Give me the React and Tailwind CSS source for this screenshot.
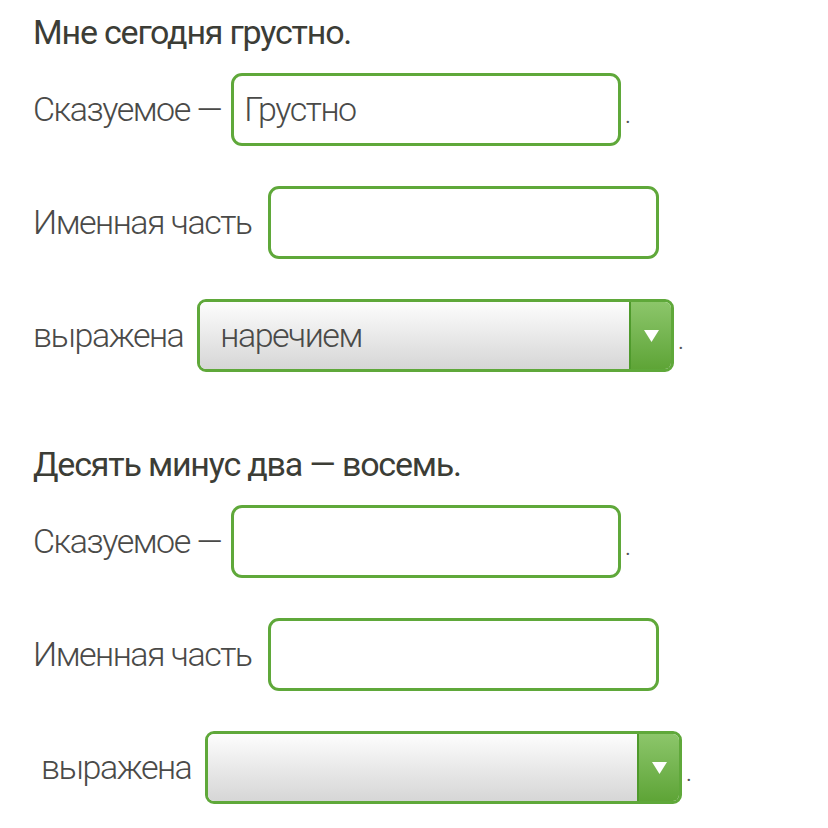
import React from "react";

const font = { fontFamily: "Roboto, 'Noto Sans', sans-serif" };

const TextBox = ({ value, width }) => (
  <div
    className={`h-[73px] border-[3px] border-[#5fa83a] rounded-[11px] bg-white flex items-center pl-[10px] text-[34px] font-light text-[#4a4a48] tracking-[-1.5px] ${width}`}
  >
    {value}
  </div>
);

const Select = ({ value, width }) => (
  <div
    className={`h-[73px] border-[3px] border-[#5fa83a] rounded-[9px] overflow-hidden flex ${width}`}
  >
    <div className="flex-1 flex items-center pl-[20px] bg-gradient-to-b from-[#fdfdfd] to-[#d6d6d6] text-[34px] font-light text-[#4a4a48] tracking-[-1.5px]">
      {value}
    </div>
    <div className="w-[42px] border-l-2 border-[#4f9a2c] bg-gradient-to-b from-[#8cc66a] to-[#5ea436] flex items-center justify-center">
      <svg width="15" height="12" viewBox="0 0 15 12">
        <path d="M0 0 H15 L7.5 12 Z" fill="#fff" />
      </svg>
    </div>
  </div>
);

const Row = ({ label, children, dot, gap, indent }) => (
  <div className={`flex items-center h-[73px] ${indent ? "pl-[8px]" : ""}`}>
    <span
      className={`text-[34px] font-light text-[#4a4a48] tracking-[-1.5px] whitespace-pre ${gap}`}
    >
      {label}
    </span>
    {children}
    {dot && <span className="text-[20px] text-[#555] ml-[4px] mt-[12px]">.</span>}
  </div>
);

const Block = ({ title, predicate, selectValue, indentLast }) => (
  <div className="flex flex-col">
    <h2 className="text-[34px] font-normal text-[#3c3d36] tracking-[-1.2px] leading-[40px] mb-[21px]">
      {title}
    </h2>
    <div className="flex flex-col gap-[40px]">
      <Row label="Сказуемое —" gap="mr-[10px]" dot>
        <TextBox value={predicate} width="w-[390px]" />
      </Row>
      <Row label="Именная часть" gap="mr-[16px]">
        <TextBox value="" width="w-[391px]" />
      </Row>
      <Row label="выражена" gap="mr-[14px]" dot indent={indentLast}>
        <Select value={selectValue} width="w-[477px]" />
      </Row>
    </div>
  </div>
);

export default function App() {
  return (
    <div className="w-[828px] h-[828px] bg-white pl-[33px] pt-[12px]" style={font}>
      <div className="flex flex-col gap-[72px]">
        <Block title="Мне сегодня грустно." predicate="Грустно" selectValue="наречием" />
        <Block title="Десять минус два — восемь." predicate="" selectValue="" indentLast />
      </div>
    </div>
  );
}
